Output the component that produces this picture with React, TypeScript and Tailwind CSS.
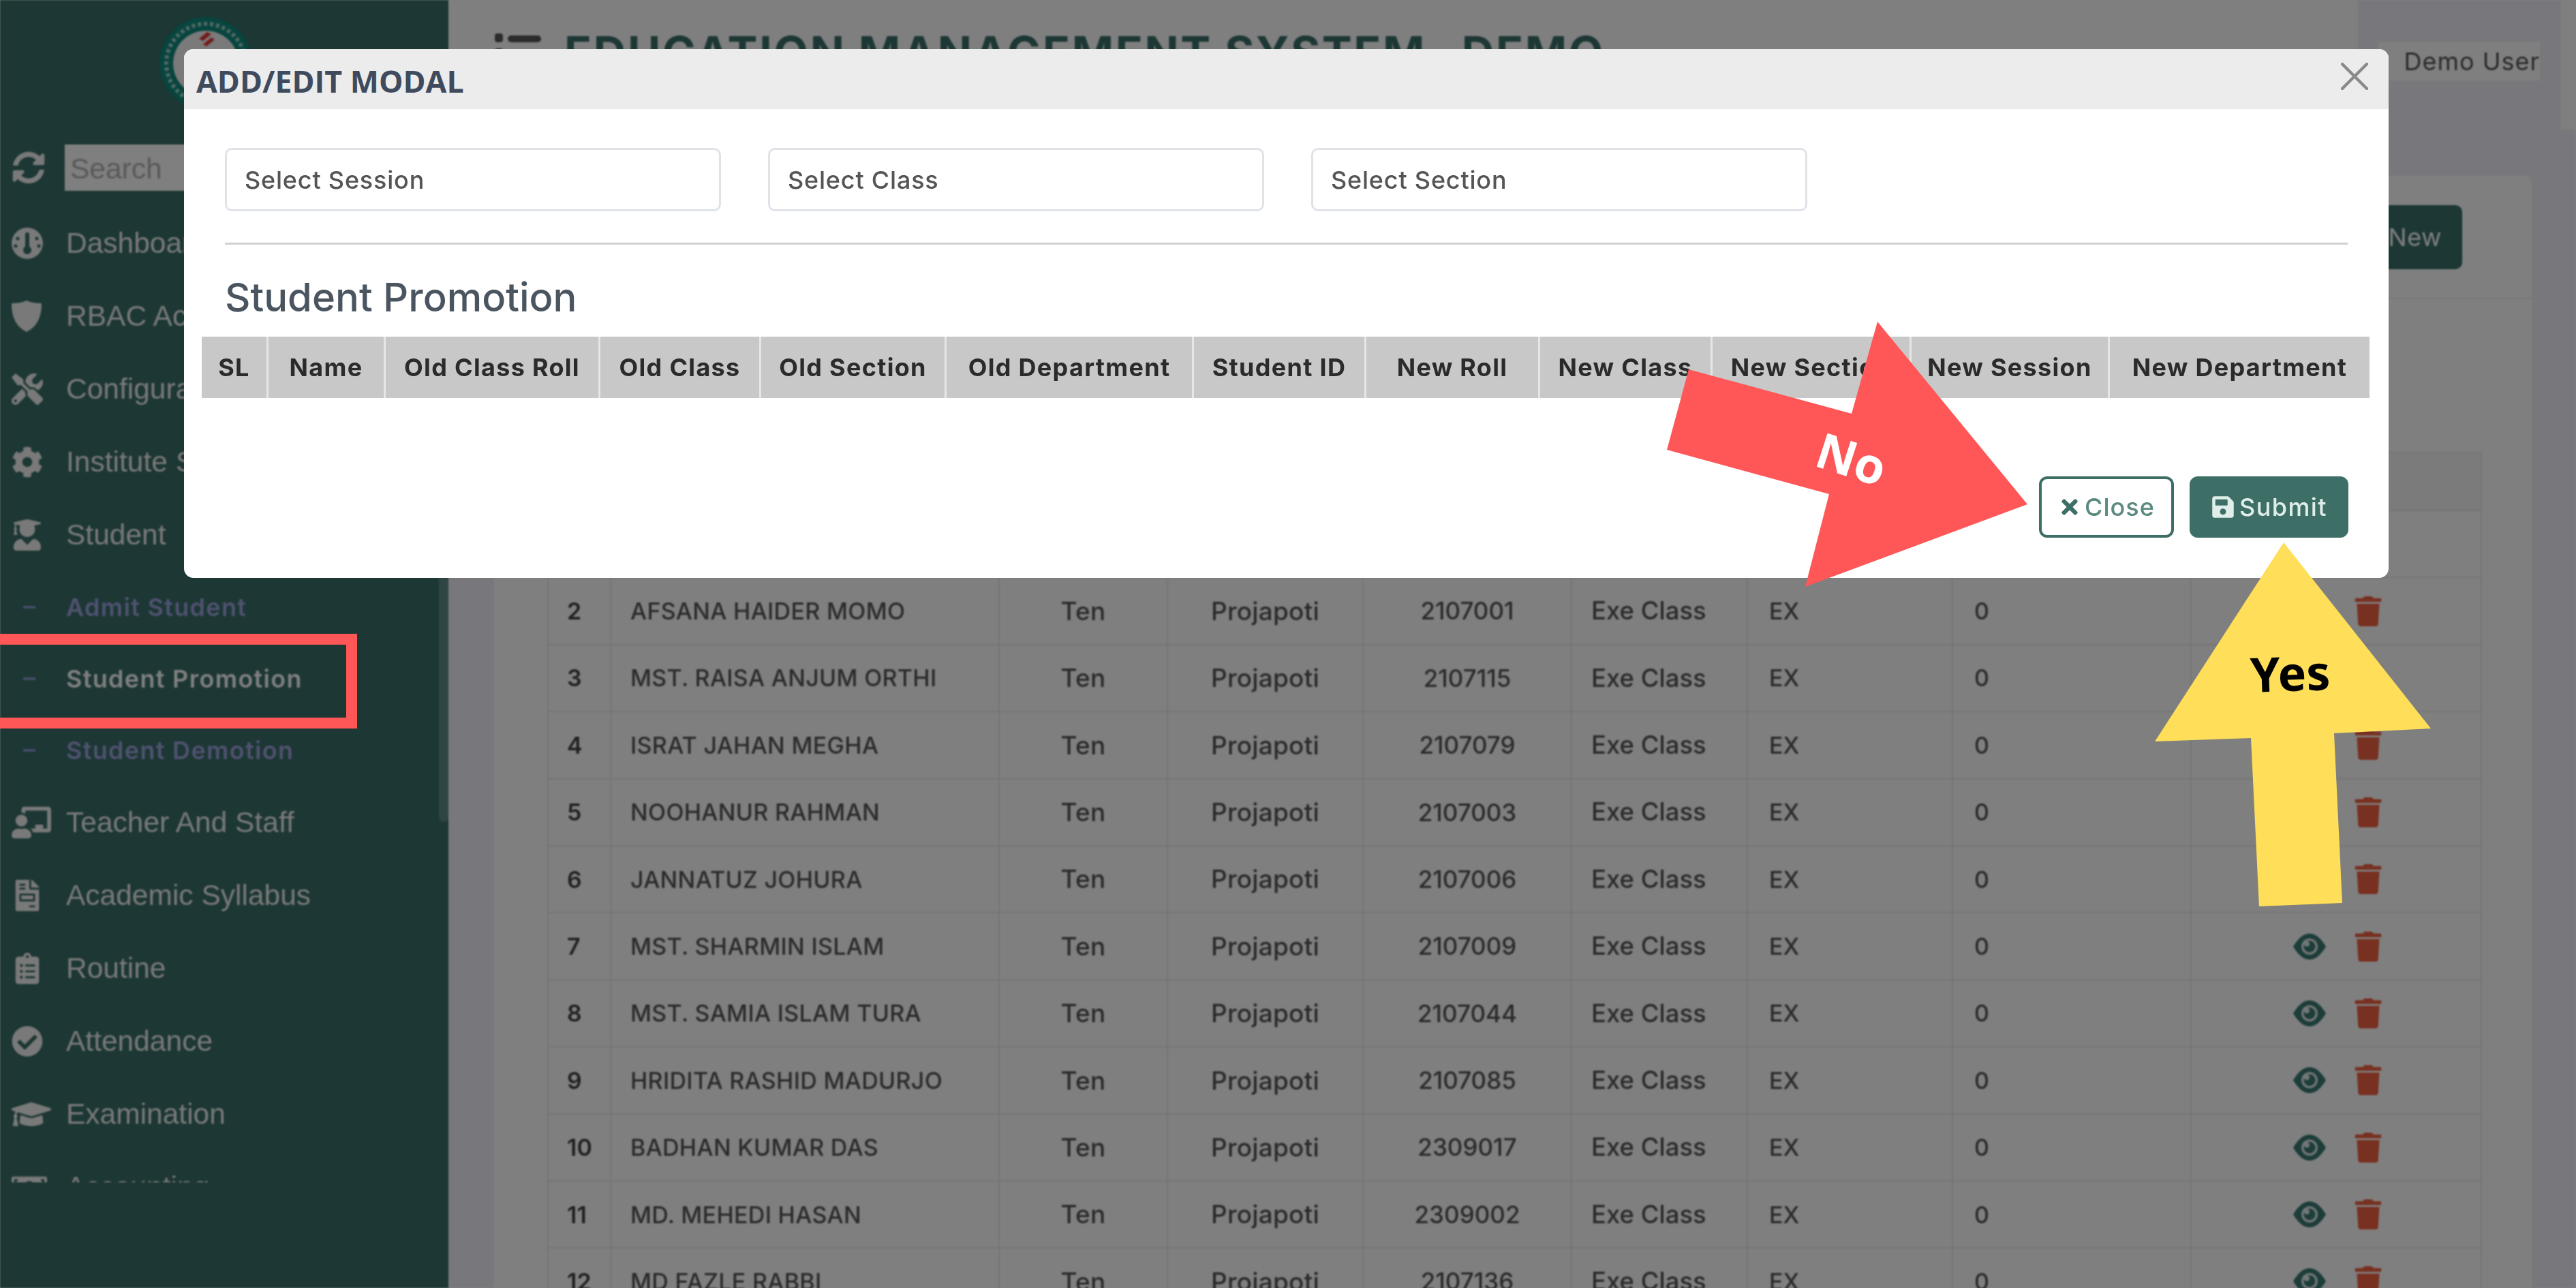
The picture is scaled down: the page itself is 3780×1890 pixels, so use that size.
import React from 'react';
import {
  FaSyncAlt,
  FaTools,
  FaCog,
  FaUserGraduate,
  FaChalkboardTeacher,
  FaFileInvoice,
  FaClipboardList,
  FaCheckCircle,
  FaGraduationCap,
  FaMoneyBillAlt,
  FaTrash,
  FaSave,
  FaTimes,
} from 'react-icons/fa';

const poppins = { fontFamily: 'Inter, "Noto Sans", sans-serif' };

const students = [
  ['1', '', ''],
  ['2', 'AFSANA HAIDER MOMO', '2107001'],
  ['3', 'MST. RAISA ANJUM ORTHI', '2107115'],
  ['4', 'ISRAT JAHAN MEGHA', '2107079'],
  ['5', 'NOOHANUR RAHMAN', '2107003'],
  ['6', 'JANNATUZ JOHURA', '2107006'],
  ['7', 'MST. SHARMIN ISLAM', '2107009'],
  ['8', 'MST. SAMIA ISLAM TURA', '2107044'],
  ['9', 'HRIDITA RASHID MADURJO', '2107085'],
  ['10', 'BADHAN KUMAR DAS', '2309017'],
  ['11', 'MD. MEHEDI HASAN', '2309002'],
  ['12', 'MD FAZLE RABBI', '2107136'],
];

const promotionColumns = [
  { label: 'SL', width: 'w-[98px]' },
  { label: 'Name', width: 'w-[172px]' },
  { label: 'Old Class Roll', width: 'w-[315px]' },
  { label: 'Old Class', width: 'w-[236px]' },
  { label: 'Old Section', width: 'w-[272px]' },
  { label: 'Old Department', width: 'w-[363px]' },
  { label: 'Student ID', width: 'w-[253px]' },
  { label: 'New Roll', width: 'w-[255px]' },
  { label: 'New Class', width: 'w-[253px]' },
  { label: 'New Section', width: 'w-[292px]' },
  { label: 'New Session', width: 'w-[291px]' },
  { label: 'New Department', width: 'w-[381px]' },
];

const NavItem: React.FC<{ icon: React.ReactNode; label: string }> = ({ icon, label }) => (
  <div className="flex h-[107px] shrink-0 items-center">
    <div className="flex w-[97px] shrink-0 pl-[17px] text-[#f2f2f2]">{icon}</div>
    <span className="whitespace-nowrap text-[42.5px] text-[#f2f2f2]" style={{ fontFamily: '"Liberation Sans", sans-serif' }}>
      {label}
    </span>
  </div>
);

const SubItem: React.FC<{ label: string; active?: boolean }> = ({ label, active }) => (
  <div className="flex h-[105px] shrink-0 items-center">
    <div className="w-[97px] shrink-0 pl-[34px]">
      <div className="h-[4px] w-[18px] bg-[#8a9ad0]"></div>
    </div>
    <span
      className={`whitespace-nowrap text-[36px] font-semibold tracking-[1.3px] ${active ? 'text-white' : 'text-[#a0a4e0]'}`}
      style={poppins}
    >
      {label}
    </span>
  </div>
);

const Logo = () => (
  <svg viewBox="0 0 136 136" className="h-[136px] w-[136px]">
    <circle cx="68" cy="68" r="68" fill="#0f8a7c" />
    <circle cx="68" cy="68" r="58" fill="none" stroke="#ffffff" strokeWidth="6" strokeDasharray="5 4" opacity="0.6" />
    <circle cx="68" cy="68" r="48" fill="#f4f4f4" />
    <path d="M70 22l6 3-12 10-6-3zM76 30l5 3-12 10-5-3z" fill="#e53935" />
  </svg>
);

const GaugeIcon = () => (
  <svg viewBox="0 0 46 46" className="h-[46px] w-[46px]">
    <circle cx="23" cy="23" r="23" fill="currentColor" />
    <rect x="20" y="7" width="6" height="24" rx="3" fill="#386e68" />
    <circle cx="23" cy="33" r="6" fill="#386e68" />
    <circle cx="9" cy="16" r="2.5" fill="#386e68" />
    <circle cx="37" cy="16" r="2.5" fill="#386e68" />
    <circle cx="6" cy="27" r="2.5" fill="#386e68" />
    <circle cx="40" cy="27" r="2.5" fill="#386e68" />
  </svg>
);

const ShieldIcon = () => (
  <svg viewBox="0 0 44 46" className="h-[46px] w-[44px]">
    <path d="M22 0C29 3 36 4 44 4c0 20-6 34-22 42C6 38 0 24 0 4c8 0 15-1 22-4z" fill="currentColor" />
  </svg>
);

const MenuBarsIcon = () => (
  <svg viewBox="0 0 68 60" className="mt-[5px] h-[60px] w-[68px] shrink-0" fill="#585858">
    <rect x="0" y="0" width="12" height="13" rx="4" />
    <rect x="19" y="3" width="49" height="10" rx="5" />
    <rect x="0" y="22" width="12" height="13" rx="4" />
    <rect x="19" y="25" width="49" height="10" rx="5" />
    <rect x="0" y="44" width="12" height="13" rx="4" />
    <rect x="19" y="47" width="49" height="10" rx="5" />
  </svg>
);

const EyeIcon = () => (
  <svg viewBox="0 0 48 38" className="h-[38px] w-[48px]">
    <path d="M0 19C7 7 15 0 24 0s17 7 24 19c-7 12-15 19-24 19S7 31 0 19z" fill="#387a74" />
    <circle cx="24" cy="19" r="12" fill="#ffffff" opacity="0.85" />
    <circle cx="24" cy="19" r="8.5" fill="#387a74" />
    <circle cx="20" cy="15" r="4" fill="#ffffff" opacity="0.85" />
  </svg>
);

const App: React.FC = () => {
  return (
    <div className="relative h-[1890px] w-[3780px] overflow-hidden">
      {/* Page behind the modal */}
      <div className="flex h-full bg-[#f1f1f8] blur-[1px]">
        <aside className="relative flex h-full w-[658px] shrink-0 flex-col bg-[#386e68]">
          <div className="flex h-[303px] shrink-0 flex-col">
            <div className="flex h-[212px] shrink-0 justify-center pt-[25px] pr-[54px]">
              <Logo />
            </div>
            <div className="flex items-center">
              <div className="flex w-[95px] shrink-0 pl-[18px] text-[#f2f2f2]">
                <FaSyncAlt size={48} />
              </div>
              <div
                className="flex h-[68px] w-[500px] items-center bg-white px-[8px] pt-[4px] text-[42.5px] text-[#b4b4b4]"
                style={{ fontFamily: '"Liberation Sans", sans-serif' }}
              >
                Search
              </div>
            </div>
          </div>
          <div className="flex h-[1432px] flex-col overflow-hidden">
            <NavItem icon={<GaugeIcon />} label="Dashboard" />
            <NavItem icon={<ShieldIcon />} label="RBAC Access Control" />
            <NavItem icon={<FaTools size={46} />} label="Configuration" />
            <NavItem icon={<FaCog size={46} />} label="Institute Setup" />
            <NavItem icon={<FaUserGraduate size={46} />} label="Student" />
            <SubItem label="Admit Student" />
            <SubItem label="Student Promotion" active />
            <SubItem label="Student Demotion" />
            <NavItem icon={<FaChalkboardTeacher size={58} />} label="Teacher And Staff" />
            <NavItem icon={<FaFileInvoice size={46} />} label="Academic Syllabus" />
            <NavItem icon={<FaClipboardList size={46} />} label="Routine" />
            <NavItem icon={<FaCheckCircle size={46} />} label="Attendance" />
            <NavItem icon={<FaGraduationCap size={58} />} label="Examination" />
            <NavItem icon={<FaMoneyBillAlt size={52} />} label="Accounting" />
          </div>
          {/* sidebar scrollbar */}
          <div className="absolute top-[600px] right-0 h-[606px] w-[14px] rounded-full bg-white/20"></div>
        </aside>

        <main className="flex min-w-0 flex-1 flex-col">
          <header className="flex h-[258px] shrink-0">
            <div className="flex w-[2802px] shrink-0 items-start bg-white pt-[44px] pl-[68px]">
              <MenuBarsIcon />
              <h1
                className="ml-[34px] whitespace-nowrap text-[66px] font-bold leading-[66px] tracking-[2.6px] text-[#386e68]"
                style={poppins}
              >
                EDUCATION MANAGEMENT SYSTEM- DEMO
              </h1>
            </div>
            <div className="flex flex-1 items-start justify-between pt-[62px] pl-[30px]">
              <div className="flex h-[56px] w-[237px] items-center justify-end bg-white">
                <span className="whitespace-nowrap text-[36px] tracking-[1px] text-[#555]" style={poppins}>
                  Demo User
                </span>
              </div>
              <div className="mt-[-62px] h-[190px] w-[22px] bg-white"></div>
            </div>
          </header>

          <section className="ml-[67px] flex min-h-0 w-[2990px] flex-1 flex-col rounded-t-[10px] bg-white">
            <div className="flex h-[181px] shrink-0 items-start justify-end border-b-2 border-[#eeeeee] pt-[43px] pr-[102px]">
              <button
                className="flex h-[94px] w-[300px] items-center justify-end rounded-[10px] bg-[#386e68] pr-[30px] text-[36px] tracking-[0.5px] text-white"
                style={poppins}
              >
                New
              </button>
            </div>
            <div className="pt-[224px] pl-[78px]">
              <table className="w-[2837px] table-fixed border-collapse text-[34px] font-medium text-[#555]" style={poppins}>
                <colgroup>
                  <col className="w-[92px]" />
                  <col className="w-[570px]" />
                  <col className="w-[247px]" />
                  <col className="w-[287px]" />
                  <col className="w-[306px]" />
                  <col className="w-[258px]" />
                  <col className="w-[301px]" />
                  <col className="w-[350px]" />
                  <col className="w-[426px]" />
                </colgroup>
                <thead>
                  <tr className="h-[85px] bg-[#f6f6f6]">
                    <th className="border-2 border-[#e9e9e9]"></th>
                    <th className="border-2 border-[#e9e9e9]"></th>
                    <th className="border-2 border-[#e9e9e9]"></th>
                    <th className="border-2 border-[#e9e9e9]"></th>
                    <th className="border-2 border-[#e9e9e9]"></th>
                    <th className="border-2 border-[#e9e9e9]"></th>
                    <th className="border-2 border-[#e9e9e9]"></th>
                    <th className="border-2 border-[#e9e9e9]"></th>
                    <th className="border-2 border-[#e9e9e9]"></th>
                  </tr>
                </thead>
                <tbody>
                  {students.map(([sl, name, roll]) => (
                    <tr key={sl} className="h-[98.4px]">
                      <td className="border-2 border-[#e9e9e9] pl-[27px] font-semibold text-[#444]">{sl}</td>
                      <td className="whitespace-nowrap border-2 border-[#e9e9e9] pl-[28px] tracking-[0.3px]">{name}</td>
                      <td className="border-2 border-[#e9e9e9] text-center text-[37px] tracking-[0.2px]">Ten</td>
                      <td className="border-2 border-[#e9e9e9] text-center text-[37px] tracking-[0.2px]">Projapoti</td>
                      <td className="border-2 border-[#e9e9e9] text-center text-[35px]">{roll}</td>
                      <td className="border-2 border-[#e9e9e9] pl-[28px] text-[36.5px]">Exe Class</td>
                      <td className="border-2 border-[#e9e9e9] pl-[31px]">EX</td>
                      <td className="border-2 border-[#e9e9e9] pl-[31px]">0</td>
                      <td className="border-2 border-[#e9e9e9]">
                        <div className="flex items-center gap-[40px] pl-[149px]">
                          <EyeIcon />
                          <FaTrash size={44} className="text-[#f06040]" />
                        </div>
                      </td>
                    </tr>
                  ))}
                </tbody>
              </table>
            </div>
          </section>
        </main>
      </div>

      {/* Backdrop */}
      <div className="absolute inset-0 bg-black/50"></div>

      {/* Modal */}
      <div className="absolute top-[72px] left-[270px] flex h-[776px] w-[3235px] flex-col rounded-[14px] bg-white blur-[0.6px]">
        <div className="flex h-[88px] shrink-0 items-center justify-between rounded-t-[14px] bg-[#ececec] pr-[30px] pl-[18px]">
          <h2 className="mt-[6px] text-[44.7px] font-bold text-[#3f4b5c]" style={{ fontFamily: '"Open Sans", sans-serif' }}>
            ADD/EDIT MODAL
          </h2>
          <svg viewBox="0 0 40 40" className="mb-[8px] h-[40px] w-[40px]" stroke="#8a8a8a" strokeWidth="4.5" strokeLinecap="round">
            <path d="M2 2l36 36M38 2L2 38" />
          </svg>
        </div>

        <div className="flex flex-col px-[60px] pt-[57px]">
          <div className="flex gap-[69px]">
            {['Select Session', 'Select Class', 'Select Section'].map((label) => (
              <div
                key={label}
                className="flex h-[93px] w-[728px] items-center rounded-[10px] border-[3px] border-[#dfe3e8] pl-[26px] text-[36px] font-medium tracking-[0.8px] text-[#555]"
                style={poppins}
              >
                {label}
              </div>
            ))}
          </div>
          <hr className="mt-[46px] h-[3px] border-0 bg-[#d0d0d0]" />
          <h3 className="mt-[50px] text-[58px] font-medium leading-[54px] text-[#4a5560]" style={poppins}>
            Student Promotion
          </h3>
        </div>

        <div className="mt-[31px] flex h-[90px] pl-[26px]">
          {promotionColumns.map((col) => (
            <div
              key={col.label}
              className={`flex items-center justify-center whitespace-nowrap border-r-[3px] border-[#e6e6e6] bg-[#c8c8c8] text-[36px] font-bold tracking-[1.3px] text-[#2b2b2b] last:border-r-0 ${col.width}`}
              style={poppins}
            >
              {col.label}
            </div>
          ))}
        </div>

        <div className="flex justify-end gap-[23px] pt-[115px] pr-[59px]">
          <button
            className="flex h-[90px] w-[198px] items-center justify-center gap-[5px] rounded-[12px] border-[4px] border-[#3e6f67] bg-white text-[36px] font-medium tracking-[1px] text-[#5a8a80]"
            style={poppins}
          >
            <FaTimes size={34} className="text-[#3e6f67]" />
            Close
          </button>
          <button
            className="flex h-[90px] w-[233px] items-center justify-center gap-[6px] rounded-[12px] bg-[#3e6f67] text-[36px] font-medium tracking-[1.4px] text-[#e0eeea]"
            style={poppins}
          >
            <FaSave size={36} />
            Submit
          </button>
        </div>
      </div>

      {/* Annotation: red box round the menu item */}
      <div className="absolute top-[930px] left-[-16px] h-[139px] w-[540px] border-[16px] border-[#ff5757]"></div>

      {/* Annotation arrows */}
      <svg viewBox="0 0 3780 1890" className="absolute inset-0 h-[1890px] w-[3780px]">
        <polygon points="2478,542 2717,607 2755,472 2975,740 2649,861 2684,725 2446,660" fill="#ff5757" />
        <polygon points="3351,796 3567,1069 3425,1076 3437,1325 3315,1330 3303,1083 3162,1088" fill="#ffde59" />
      </svg>
      <span
        className="absolute top-[627px] left-[2666px] rotate-[18deg] text-[72px] font-bold leading-[90px] text-white"
        style={{ fontFamily: '"Open Sans", sans-serif' }}
      >
        No
      </span>
      <span
        className="absolute top-[942px] left-[3302px] rotate-[-2deg] text-[70px] font-bold leading-[90px] text-black"
        style={{ fontFamily: '"Noto Sans", sans-serif' }}
      >
        Yes
      </span>
    </div>
  );
};

export default App;
